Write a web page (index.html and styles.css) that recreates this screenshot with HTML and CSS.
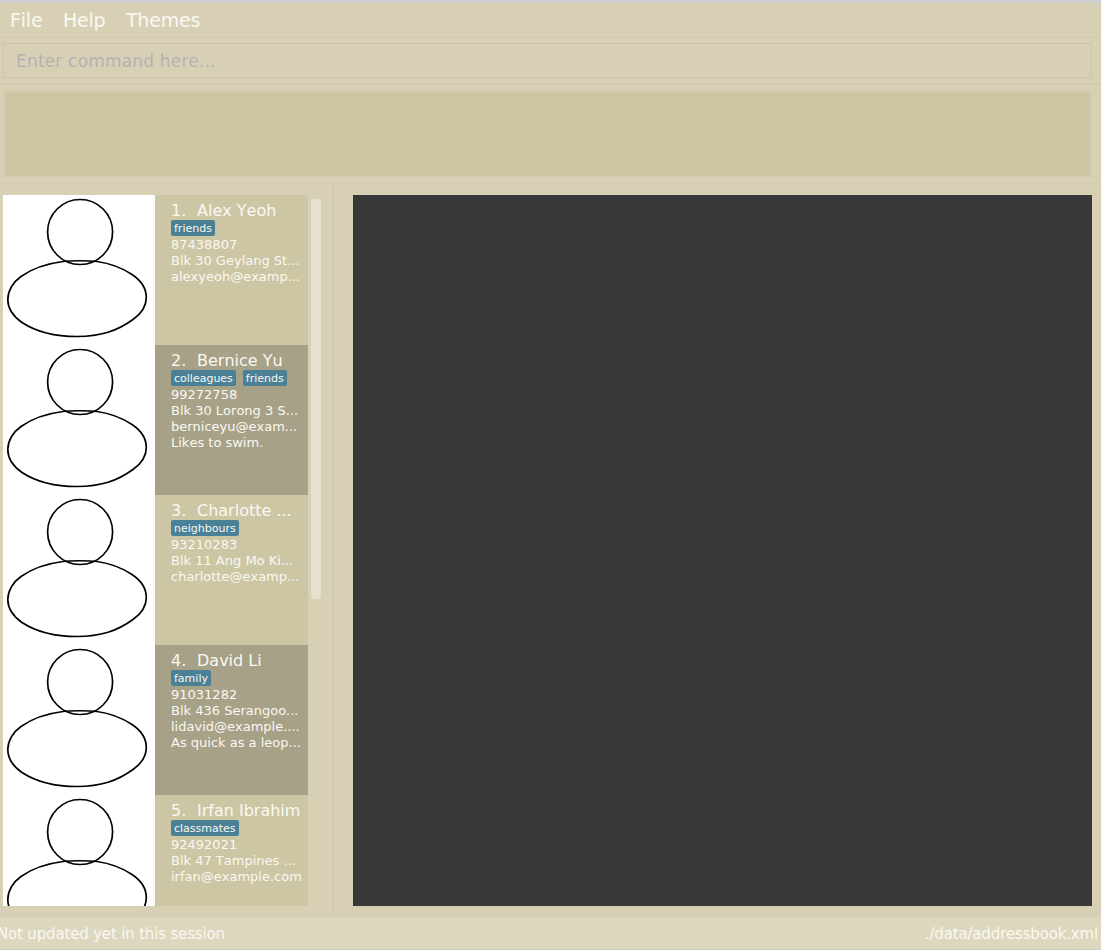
FILE: index.html
```html
<!DOCTYPE html>
<html lang="en">
<head>
<meta charset="utf-8">
<title>Address Book</title>
<link rel="stylesheet" href="styles.css">
</head>
<body>
<svg class="defs" width="0" height="0" aria-hidden="true">
  <symbol id="person" viewBox="0 0 152 150">
    <ellipse cx="77.100" cy="37" rx="32.500" ry="32.500"/>
    <path d="M60 66.500C66 65.500 87 65.500 94 66.500C108 68.500 120 73.500 129 79.500C138 85.500 143.300 94 143.300 102.500C143.300 111 138.500 118.500 130 124.500C114 136 98 141.500 74 141.500C52 141.500 32 136 19 127.500C9 120.500 4.800 113 4.800 104.500C4.800 96 10 87 18 81.500C30 73 44 68.500 60 66.500Z"/>
  </symbol>
</svg>
<div class="window">
  <nav class="menu"><span>File</span><span>Help</span><span>Themes</span></nav>
  <div class="command"><input class="command-input" type="text" placeholder="Enter command here..."></div>
  <div class="result"><div class="result-box"></div></div>
  <main class="content">
    <section class="people">
      <div class="list">
        <article class="person">
          <svg class="avatar"><use href="#person"/></svg>
          <div class="card">
            <h2><span class="num">1.</span><span>Alex Yeoh</span></h2>
            <div class="tags"><span>friends</span></div>
            <p>87438807</p><p>Blk 30 Geylang St...</p><p>alexyeoh@examp...</p>
          </div>
        </article>
        <article class="person">
          <svg class="avatar"><use href="#person"/></svg>
          <div class="card">
            <h2><span class="num">2.</span><span>Bernice Yu</span></h2>
            <div class="tags"><span>colleagues</span><span>friends</span></div>
            <p>99272758</p><p>Blk 30 Lorong 3 S...</p><p>berniceyu@exam...</p><p>Likes to swim.</p>
          </div>
        </article>
        <article class="person">
          <svg class="avatar"><use href="#person"/></svg>
          <div class="card">
            <h2><span class="num">3.</span><span>Charlotte ...</span></h2>
            <div class="tags"><span>neighbours</span></div>
            <p>93210283</p><p>Blk 11 Ang Mo Ki...</p><p>charlotte@examp...</p>
          </div>
        </article>
        <article class="person">
          <svg class="avatar"><use href="#person"/></svg>
          <div class="card">
            <h2><span class="num">4.</span><span>David Li</span></h2>
            <div class="tags"><span>family</span></div>
            <p>91031282</p><p>Blk 436 Serangoo...</p><p>lidavid@example....</p><p>As quick as a leop...</p>
          </div>
        </article>
        <article class="person">
          <svg class="avatar"><use href="#person"/></svg>
          <div class="card">
            <h2><span class="num">5.</span><span>Irfan Ibrahim</span></h2>
            <div class="tags"><span>classmates</span></div>
            <p>92492021</p><p>Blk 47 Tampines ...</p><p>irfan@example.com</p>
          </div>
        </article>
      </div>
      <div class="scrollbar"><div class="thumb"></div></div>
    </section>
    <div class="divider"></div>
    <section class="browser"></section>
  </main>
  <footer class="status"><span>Not updated yet in this session</span><span>./data/addressbook.xml</span></footer>
</div>
</body>
</html>
```
FILE: styles.css
```css
* { box-sizing: border-box; }
body { margin: 0; font-family: "DejaVu Sans", sans-serif; font-kerning: none; color: #faf8f2; }
.defs { display: block; }
.window {
  width: 1101px; height: 950px; overflow: hidden;
  display: flex; flex-direction: column;
  background: #d8d0b4;
  border-top: 3px solid #cecece; border-bottom: 1px solid #cbcbc6;
}
.menu {
  height: 35px; padding-left: 10px; display: flex; gap: 20.5px;
  font-size: 19px; letter-spacing: -0.2px; line-height: 35px; border-bottom: 1px solid #d2caac;
}
.command { height: 47px; padding: 5px 9px 0 3px; border-bottom: 2px solid #d2caac; }
.command-input {
  display: block; width: 100%; height: 35px; padding: 0 12px; border: 1px solid #ccc4a2;
  border-radius: 0; background: transparent; font: 17px "DejaVu Sans", sans-serif; letter-spacing: 0.18px; color: #faf8f2;
}
.command-input::placeholder { color: #b3b3b3; opacity: 1; }
.result { height: 99px; padding: 5px 9px 0 3px; border-bottom: 1px solid #d2caac; }
.result-box { height: 88px; background: #ccc6a4; border: 2px solid #d6cfb3; outline: 1px solid #d3ccae; outline-offset: -1px; }
.content { height: 733px; display: flex; padding-top: 1px; }
.people { width: 333px; height: 721px; padding: 10px 0 0 3px; display: flex; }
.list { width: 305px; overflow: hidden; }
.person { height: 150px; display: flex; }
.avatar { width: 152px; height: 150px; background: #fff; fill: none; stroke: #000; stroke-width: 1.7; }
.card { width: 153px; padding: 7px 0 0 16px; background: #ccc6a4; white-space: nowrap; }
.person:nth-child(even) .card { background: #a7a187; }
.card h2 { margin: 0; font-size: 16px; font-weight: 400; line-height: 18px; display: flex; }
.num { width: 26px; }
.tags { display: flex; gap: 7px; height: 16px; margin-bottom: 1px; }
.tags span { padding: 0 3px; border-radius: 2px; background: #4b8196; font-size: 11px; line-height: 17px; }
.card p { margin: 0; font-size: 13px; line-height: 16px; }
.scrollbar { padding: 4px 0 0 3px; }
.thumb { width: 10px; height: 400px; border-radius: 3px; background: #e6e0d0; }
.divider { width: 1px; height: 731px; background: #ccc4a2; }
.browser { flex: 1; height: 711px; margin: 10px 9px 0 19px; background: #383838; }
.status {
  height: 32px; padding: 0 3px 0 0; display: flex; justify-content: space-between;
  background: #ddd7bd; font-size: 15px; letter-spacing: -0.17px; line-height: 35px;
}
.status span:first-child { margin-left: -3px; }
```
